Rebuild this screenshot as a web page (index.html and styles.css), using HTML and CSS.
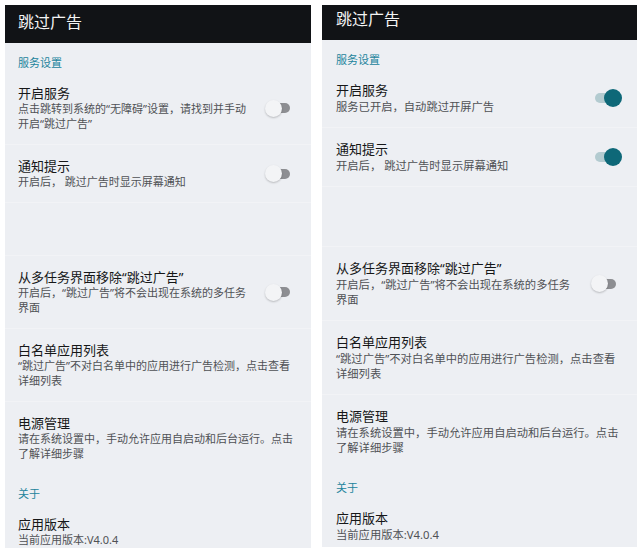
FILE: index.html
```html
<!DOCTYPE html>
<html lang="zh-CN">
<head>
<meta charset="utf-8">
<title>跳过广告</title>
<link rel="stylesheet" href="styles.css">
</head>
<body>
<div class="page">
  <section class="phone phone-a">
    <header class="appbar">跳过广告</header>
    <div class="group-title">服务设置</div>
    <div class="item">
      <div class="item-text">
        <div class="item-title">开启服务</div>
        <div class="item-desc">点击跳转到系统的“无障碍”设置，请找到并手动<br>开启“跳过广告”</div>
      </div>
      <span class="switch off"><span class="knob"></span></span>
    </div>
    <div class="item">
      <div class="item-text">
        <div class="item-title">通知提示</div>
        <div class="item-desc">开启后， 跳过广告时显示屏幕通知</div>
      </div>
      <span class="switch off"><span class="knob"></span></span>
    </div>
    <div class="spacer"></div>
    <div class="item">
      <div class="item-text">
        <div class="item-title">从多任务界面移除“跳过广告”</div>
        <div class="item-desc">开启后，“跳过广告”将不会出现在系统的多任务<br>界面</div>
      </div>
      <span class="switch off"><span class="knob"></span></span>
    </div>
    <div class="item">
      <div class="item-text">
        <div class="item-title">白名单应用列表</div>
        <div class="item-desc">“跳过广告”不对白名单中的应用进行广告检测，点击查看<br>详细列表</div>
      </div>
    </div>
    <div class="item no-line">
      <div class="item-text">
        <div class="item-title">电源管理</div>
        <div class="item-desc">请在系统设置中，手动允许应用自启动和后台运行。点击<br>了解详细步骤</div>
      </div>
    </div>
    <div class="group-title">关于</div>
    <div class="item no-line">
      <div class="item-text">
        <div class="item-title">应用版本</div>
        <div class="item-desc">当前应用版本:V4.0.4</div>
      </div>
    </div>
  </section>

  <section class="phone phone-b">
    <header class="appbar">跳过广告</header>
    <div class="group-title">服务设置</div>
    <div class="item">
      <div class="item-text">
        <div class="item-title">开启服务</div>
        <div class="item-desc">服务已开启，自动跳过开屏广告</div>
      </div>
      <span class="switch on"><span class="knob"></span></span>
    </div>
    <div class="item">
      <div class="item-text">
        <div class="item-title">通知提示</div>
        <div class="item-desc">开启后， 跳过广告时显示屏幕通知</div>
      </div>
      <span class="switch on"><span class="knob"></span></span>
    </div>
    <div class="spacer"></div>
    <div class="item">
      <div class="item-text">
        <div class="item-title">从多任务界面移除“跳过广告”</div>
        <div class="item-desc">开启后，“跳过广告”将不会出现在系统的多任务<br>界面</div>
      </div>
      <span class="switch off"><span class="knob"></span></span>
    </div>
    <div class="item">
      <div class="item-text">
        <div class="item-title">白名单应用列表</div>
        <div class="item-desc">“跳过广告”不对白名单中的应用进行广告检测，点击查看<br>详细列表</div>
      </div>
    </div>
    <div class="item no-line">
      <div class="item-text">
        <div class="item-title">电源管理</div>
        <div class="item-desc">请在系统设置中，手动允许应用自启动和后台运行。点击<br>了解详细步骤</div>
      </div>
    </div>
    <div class="group-title">关于</div>
    <div class="item no-line">
      <div class="item-text">
        <div class="item-title">应用版本</div>
        <div class="item-desc">当前应用版本:V4.0.4</div>
      </div>
    </div>
  </section>
</div>
</body>
</html>
```

FILE: styles.css
```css
* { box-sizing: border-box; }

body {
  margin: 0;
  background: #ffffff;
  font-family: "Noto Sans", "Noto Sans CJK SC", sans-serif;
}

.page {
  display: flex;
  gap: 11px;
  padding: 5px 3px 0 5px;
}

.phone {
  background: #edeff3;
  height: 543px;
  overflow: hidden;
  display: flex;
  flex-direction: column;
}

.phone-a { width: 306px; }
.phone-b { width: 315px; height: 542px; }

.appbar {
  background: #111316;
  color: #f4f4f4;
  font-size: 16px;
  font-weight: 400;
  height: 38px;
  line-height: 34px;
  padding-left: 13px;
  flex: none;
}

.phone-b .appbar {
  height: 35px;
  line-height: 28px;
  padding-left: 14px;
}

.group-title {
  padding: 13px 13px 2px;
  font-size: 11px;
  line-height: 14px;
  color: #22849c;
  flex: none;
}

.phone-b .group-title { padding-left: 14px; }

.item {
  display: flex;
  align-items: center;
  padding: 13px 18px 13px 13px;
  border-bottom: 1px solid #f2f3f6;
  flex: none;
}

.phone-b .item { padding-left: 14px; }

.item.no-line { border-bottom: 0; }

.item-text {
  flex: 1;
  min-width: 0;
}

.item-title {
  font-size: 13px;
  line-height: 16px;
  font-weight: 400;
  color: #161718;
}

.item-desc {
  font-size: 11px;
  line-height: 15px;
  color: #4f5155;
  white-space: nowrap;
}

.phone-b .item-desc {
  margin-top: 1px;
  font-size: 11.3px;
}

.spacer {
  height: 53px;
  border-bottom: 1px solid #f2f3f6;
  flex: none;
}

.phone-b .spacer { height: 60px; }

.switch {
  flex: none;
  display: flex;
  align-items: center;
  height: 10px;
  border-radius: 5px;
}

.switch .knob {
  flex: none;
  border-radius: 50%;
}

.switch.off {
  width: 22px;
  margin-right: 3px;
  background: #8d8e92;
  justify-content: flex-start;
}

.switch.off .knob {
  width: 17px;
  height: 17px;
  margin-left: -3px;
  background: #f3f4f6;
  box-shadow: 0 1px 2px rgba(0, 0, 0, 0.22);
}

.switch.on {
  width: 24px;
  background: #b3cbd0;
  justify-content: flex-end;
}

.switch.on .knob {
  width: 18px;
  height: 18px;
  margin-right: -3px;
  background: #0e6878;
}
```
